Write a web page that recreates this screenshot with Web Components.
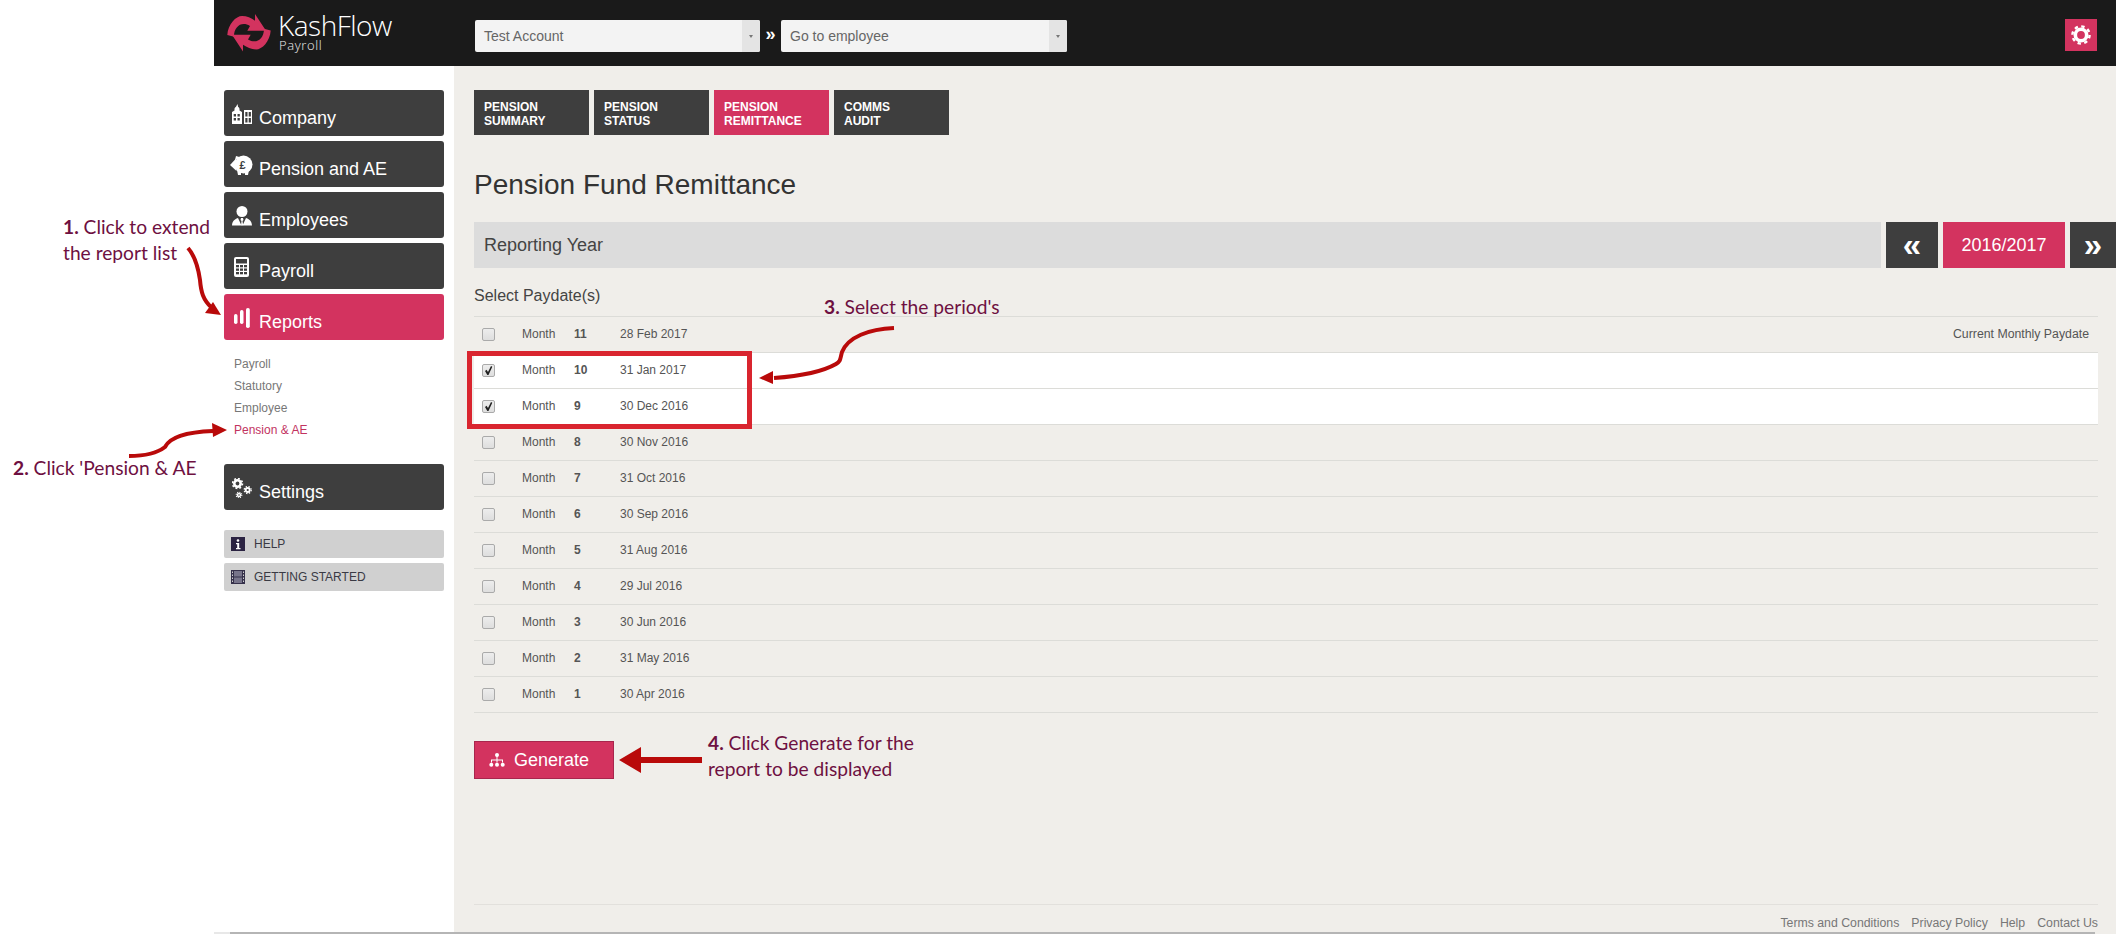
<!DOCTYPE html>
<html lang="en">
<head>
<meta charset="utf-8">
<title>KashFlow Payroll</title>
<style>
    html, body { margin: 0; height: 100%; background: #fff; overflow: hidden; }
    body { font-family: "Liberation Sans", Arial, sans-serif; }
</style>
</head>
<body>
<kf-page>
    <kf-topbar slot="top"></kf-topbar>
    <kf-sidebar slot="side"></kf-sidebar>
    <kf-remittance slot="main"></kf-remittance>
</kf-page>

<kf-callout x="63" y="214"><b>1.</b> Click to extend<br>the report list</kf-callout>
<kf-callout x="13" y="455"><b>2.</b> Click 'Pension &amp; AE</kf-callout>
<kf-callout x="824" y="294"><b>3.</b> Select the period's</kf-callout>
<kf-callout x="708" y="730"><b>4.</b> Click Generate for the<br>report to be displayed</kf-callout>
<kf-marks></kf-marks>

<script>
const ICONS = {
    company: `<svg viewBox="0 0 20 20" width="20" height="20" fill="#fff"><path d="M5.500 0l.6 3c.8.3 1.300 1 1.400 2v1.500l2.500 1.500v12H0V8l2.500-1.500V5c.1-1 .6-1.700 1.400-2z"/><path d="M12 6h8v14h-8z"/><g fill="#3e3e3e"><rect x="1.700" y="10" width="2.300" height="2.500"/><rect x="5.500" y="10" width="2.300" height="2.500"/><rect x="1.700" y="14" width="2.300" height="2.500"/><rect x="5.500" y="14" width="2.300" height="2.500"/><rect x="13.300" y="8" width="2.200" height="4.500"/><rect x="16.700" y="8" width="2.200" height="4.500"/><rect x="13.300" y="14" width="2.200" height="4.500"/><rect x="16.700" y="14" width="2.200" height="4.500"/></g></svg>`,
    pension: `<svg viewBox="0 0 24 20" width="24" height="20" fill="#fff"><circle cx="13.500" cy="9.500" r="9"/><path d="M0 10l6-6.500L6.500 16z"/><path d="M5 5l1-4 5 1.500zM7 15h4v5H8zM15 15h4l-1 5h-3z"/><text x="12.500" y="14" font-family="Liberation Sans, sans-serif" font-size="11" font-weight="bold" text-anchor="middle" fill="#3e3e3e">£</text></svg>`,
    employees: `<svg viewBox="0 0 20 20" width="20" height="20" fill="#fff"><circle cx="10" cy="5.500" r="5.500"/><path d="M0 19.500c.3-4 2-6 6-7.500l3.500 7.500zM20 19.500c-.3-4-2-6-6-7.500l-3.500 7.500z"/><path d="M9 12h2l.5 2-1 1 .7 4.500H9l.5-4.500-1-1z"/></svg>`,
    payroll: `<svg viewBox="0 0 15 20" width="15" height="20"><rect width="15" height="20" rx="2" fill="#fff"/><rect x="2" y="2" width="11" height="4.500" fill="#3e3e3e"/><g fill="#3e3e3e"><rect x="2" y="8" width="3" height="2.300"/><rect x="6" y="8" width="3" height="2.300"/><rect x="10" y="8" width="3" height="2.300"/><rect x="2" y="11.500" width="3" height="2.300"/><rect x="6" y="11.500" width="3" height="2.300"/><rect x="10" y="11.500" width="3" height="2.300"/><rect x="2" y="15" width="3" height="2.300"/><rect x="6" y="15" width="3" height="2.300"/><rect x="10" y="15" width="3" height="2.300"/></g></svg>`,
    reports: `<svg viewBox="0 0 16 20" width="16" height="20" fill="#fff"><rect x="0" y="6" width="3.500" height="10" rx="1.700"/><rect x="6" y="2" width="3.500" height="14" rx="1.700"/><rect x="12" y="0" width="3.800" height="20" rx="1.800"/></svg>`,
    settings: `<svg viewBox="0 0 20 20" width="20" height="20"><g fill="none" stroke="#fff"><circle cx="5.500" cy="5.500" r="3.200" stroke-width="2.600"/><circle cx="5.500" cy="5.500" r="5" stroke-width="1.600" stroke-dasharray="1.900 2"/><circle cx="15.700" cy="12" r="2" stroke-width="1.800"/><circle cx="15.700" cy="12" r="3.500" stroke-width="1.300" stroke-dasharray="1.400 1.400"/><circle cx="7" cy="17" r="1.500" stroke-width="1.500"/><circle cx="7" cy="17" r="2.800" stroke-width="1.100" stroke-dasharray="1.100 1.100"/></g></svg>`,
    help: `<svg viewBox="0 0 14 14" width="14" height="14"><rect width="14" height="14" fill="#2b2342"/><circle cx="7" cy="3.500" r="1.300" fill="#fff"/><path d="M5 6h3.200v5H9.500v1.200h-4.500V11h1.200V7.200H5z" fill="#fff"/></svg>`,
    started: `<svg viewBox="0 0 14 14" width="14" height="14"><rect width="14" height="14" fill="#35304a"/><rect x="3" y="1" width="8" height="5.500" fill="#77748a"/><rect x="3" y="7.500" width="8" height="5.500" fill="#77748a"/><g fill="#cfcfcf"><rect x="1" y="1.500" width="1" height="1.500"/><rect x="1" y="4.500" width="1" height="1.500"/><rect x="1" y="7.500" width="1" height="1.500"/><rect x="1" y="10.500" width="1" height="1.500"/><rect x="12" y="1.500" width="1" height="1.500"/><rect x="12" y="4.500" width="1" height="1.500"/><rect x="12" y="7.500" width="1" height="1.500"/><rect x="12" y="10.500" width="1" height="1.500"/></g></svg>`,
    sitemap: `<svg viewBox="0 0 16 14" width="16" height="14" fill="#fff"><circle cx="8" cy="2" r="2"/><path d="M7.500 3h1v3.500h5.500v3h-1V7.500H8.500v2h-1v-2H3v2H2v-3h5.500z"/><circle cx="2.300" cy="11.700" r="2"/><circle cx="8" cy="11.700" r="2"/><circle cx="13.700" cy="11.700" r="2"/></svg>`,
    gear: `<svg viewBox="0 0 20 20" width="20" height="20"><circle cx="10" cy="10" r="5.700" fill="none" stroke="#fff" stroke-width="3.600"/><circle cx="10" cy="10" r="8.600" fill="none" stroke="#fff" stroke-width="2.400" stroke-dasharray="3.400 3.350"/></svg>`
};

// page frame: empty gutter on the left, the app next to it
class KfPage extends HTMLElement {
    constructor() {
        super();
        this.attachShadow({ mode: 'open' });
        this.shadowRoot.innerHTML = `
      <style>
        :host { display: block; height: 934px; box-sizing: border-box; padding-left: 214px; }
        .app { display: grid; grid-template-columns: 240px 1fr; grid-template-rows: 66px 1fr 2px; height: 934px; }
        .top, .edge { grid-column: 1 / 3; }
        .side, .main { min-width: 0; }
        .edge { background: linear-gradient(to right, #e8e8e8 16px, #b5b5b5 16px, #b5b5b5 1881px, #f0eeea 1881px); }
      </style>
      <div class="app">
        <div class="top"><slot name="top"></slot></div>
        <div class="side"><slot name="side"></slot></div>
        <div class="main"><slot name="main"></slot></div>
        <div class="edge"></div>
      </div>`;
    }
}

class KfSelect extends HTMLElement {
    constructor() {
        super();
        this.attachShadow({ mode: 'open' });
        this.shadowRoot.innerHTML = `
      <style>
        :host { display: flex; width: 285px; height: 32px; margin-top: 20px; border-radius: 2px; overflow: hidden; background: #f3f3f3;
                font-size: 14px; color: #666; }
        .label { flex: 1; padding-left: 9px; line-height: 32px; }
        .arrow { width: 18px; background: #e4e4e4; display: flex; align-items: center; justify-content: center; }
        .arrow i { border: 2.500px solid transparent; border-top: 3px solid #777; border-bottom: 0; }
      </style>
      <div class="label"><slot></slot></div>
      <div class="arrow"><i></i></div>`;
    }
}

class KfTopbar extends HTMLElement {
    constructor() {
        super();
        this.attachShadow({ mode: 'open' });
        this.shadowRoot.innerHTML = `
      <style>
        :host { display: flex; align-items: flex-start; height: 66px; background: #1a1a1a; color: #fff; }
        .logo { width: 261px; height: 66px; display: flex; align-items: center; padding-left: 12px; box-sizing: border-box; gap: 6px; }
        .word { font-family: "Open Sans", sans-serif; font-weight: 300; margin-top: -4px; }
        .name { font-size: 28px; line-height: 28px; letter-spacing: -.5px; }
        .sub { font-size: 13px; line-height: 12px; letter-spacing: .6px; font-weight: 300; color: #eee; margin-left: 1px; }
        .sep { width: 21px; text-align: center; font: bold 18px/32px "Liberation Sans", sans-serif; margin-top: 18px; }
        .gear { width: 32px; height: 32px; margin: 19px 19px 0 auto; background: #d3335f; display: flex; align-items: center; justify-content: center; }
      </style>
      <div class="logo">
        <svg viewBox="0 0 46 38" width="46" height="38" fill="#d3335f">
          <path d="M1.300 21C2 10 10 2 16 2c5 0 9 2 13 4.700V0l11 16.700H21.300L24 12C16 7 8 12 8 22.700z"/>
          <path d="M1.300 21C2 10 10 2 16 2c5 0 9 2 13 4.700V0l11 16.700H21.300L24 12C16 7 8 12 8 22.700z" transform="rotate(180 23 18.700)"/>
        </svg>
        <div class="word"><div class="name">KashFlow</div><div class="sub">Payroll</div></div>
      </div>
      <kf-select>Test Account</kf-select>
      <div class="sep">»</div>
      <kf-select style="width: 286px">Go to employee</kf-select>
      <div class="gear">${ICONS.gear}</div>`;
    }
}

class KfNavButton extends HTMLElement {
    constructor() {
        super();
        this.attachShadow({ mode: 'open' });
    }

    connectedCallback() {
        const active = this.hasAttribute('active');
        this.shadowRoot.innerHTML = `
      <style>
        :host { display: flex; align-items: center; height: 46px; box-sizing: border-box; padding-top: 11px; border-radius: 3px;
                background: ${active ? '#d3335f' : '#3e3e3e'}; color: #fff; font-size: 18px; }
        .icon { width: 35px; display: flex; justify-content: center; margin-top: -10px; flex: none; }
      </style>
      <div class="icon">${ICONS[this.getAttribute('icon')]}</div>
      <slot></slot>`;
    }
}

class KfHelpLink extends HTMLElement {
    constructor() {
        super();
        this.attachShadow({ mode: 'open' });
    }

    connectedCallback() {
        this.shadowRoot.innerHTML = `
      <style>
        :host { display: flex; align-items: center; height: 28px; border-radius: 2px; background: #d0d0d0; color: #3a3a44; font-size: 12px; }
        .icon { width: 30px; padding-left: 7px; box-sizing: border-box; display: flex; flex: none; }
      </style>
      <div class="icon">${ICONS[this.getAttribute('icon')]}</div>
      <slot></slot>`;
    }
}

class KfSidebar extends HTMLElement {
    constructor() {
        super();
        this.attachShadow({ mode: 'open' });
        this.shadowRoot.innerHTML = `
      <style>
        :host { display: block; padding: 24px 10px 0; background: #fff; height: 100%; box-sizing: border-box; }
        .stack { display: grid; gap: 5px; }
        ul { list-style: none; margin: 13px 0 23px; padding: 0 0 0 10px; font-size: 12px; color: #777; }
        li { height: 22px; line-height: 22px; }
        li.on { color: #c2335f; }
        .help { display: grid; gap: 5px; margin-top: 20px; }
      </style>
      <div class="stack">
        <kf-nav-button icon="company">Company</kf-nav-button>
        <kf-nav-button icon="pension">Pension and AE</kf-nav-button>
        <kf-nav-button icon="employees">Employees</kf-nav-button>
        <kf-nav-button icon="payroll">Payroll</kf-nav-button>
        <kf-nav-button icon="reports" active>Reports</kf-nav-button>
      </div>
      <ul>
        <li>Payroll</li>
        <li>Statutory</li>
        <li>Employee</li>
        <li class="on">Pension &amp; AE</li>
      </ul>
      <kf-nav-button icon="settings">Settings</kf-nav-button>
      <div class="help">
        <kf-help-link icon="help">HELP</kf-help-link>
        <kf-help-link icon="started">GETTING STARTED</kf-help-link>
      </div>`;
    }
}

class KfTab extends HTMLElement {
    constructor() {
        super();
        this.attachShadow({ mode: 'open' });
    }

    connectedCallback() {
        this.shadowRoot.innerHTML = `
      <style>
        :host { display: block; width: 115px; height: 45px; box-sizing: border-box; padding: 10px 10px 0; color: #fff;
                background: ${this.hasAttribute('active') ? '#d3335f' : '#3e3e3e'};
                font: bold 12px/14px "Liberation Sans", sans-serif; }
      </style>
      <slot></slot>`;
    }
}

class KfPayRow extends HTMLElement {
    constructor() {
        super();
        this.attachShadow({ mode: 'open' });
    }

    connectedCallback() {
        const checked = this.hasAttribute('checked');
        const tick = checked ? '<svg viewBox="0 0 13 13" width="13" height="13"><path d="M3 7l1.500-1.300L6 8l3-6 1.300.8L6.500 11H5.300z" fill="#222"/></svg>' : '';
        this.shadowRoot.innerHTML = `
      <style>
        :host { display: flex; align-items: center; height: 36px; box-sizing: border-box; border-bottom: 1px solid #dcdcd8;
                background: ${checked ? '#fff' : 'transparent'}; color: #555; font-size: 12px; }
        .box { width: 13px; height: 13px; margin-left: 8px; box-sizing: border-box; border: 1px solid #aaa; border-radius: 2px;
               background: linear-gradient(#ededed, #dedede); position: relative; flex: none; }
        .box svg { position: absolute; left: -1px; top: -1px; }
        .m, .n, .d, .cur { margin-top: -1px; }
        .m { margin-left: 27px; width: 52px; }
        .n { width: 46px; font-weight: bold; }
        .d { flex: 1; }
        .cur { margin-right: 9px; font-size: 12.300px; }
      </style>
      <div class="box">${tick}</div>
      <div class="m">Month</div>
      <div class="n">${this.getAttribute('n')}</div>
      <div class="d">${this.getAttribute('date')}</div>
      <div class="cur"><slot></slot></div>`;
    }
}

class KfRemittance extends HTMLElement {
    constructor() {
        super();
        this.attachShadow({ mode: 'open' });
        this.rows = [
            [11, '28 Feb 2017'], [10, '31 Jan 2017'], [9, '30 Dec 2016'], [8, '30 Nov 2016'],
            [7, '31 Oct 2016'], [6, '30 Sep 2016'], [5, '31 Aug 2016'], [4, '29 Jul 2016'],
            [3, '30 Jun 2016'], [2, '31 May 2016'], [1, '30 Apr 2016']
        ];
    }

    connectedCallback() {
        const rows = this.rows.map(([n, date]) => `
        <kf-pay-row n="${n}" date="${date}" ${n === 10 || n === 9 ? 'checked' : ''}>${n === 11 ? 'Current Monthly Paydate' : ''}</kf-pay-row>`).join('');
        this.shadowRoot.innerHTML = `
      <style>
        :host { display: flex; flex-direction: column; height: 866px; box-sizing: border-box; padding: 24px 0 0 20px; background: #f0eeea; color: #333; }
        .tabs { display: flex; gap: 5px; }
        h1 { font-size: 28px; font-weight: normal; line-height: 32px; margin: 34px 0 21px; color: #333; }
        .year { display: flex; height: 46px; gap: 5px; color: #fff; }
        .year > div { display: flex; align-items: center; justify-content: center; }
        .year .label { flex: 1; justify-content: flex-start; padding-left: 10px; background: #dcdcdc; color: #444; font-size: 18px; }
        .year .step { width: 52px; background: #3e3e3e; font: bold 33px "Liberation Sans", sans-serif; }
        .year .now { width: 122px; background: #d3335f; font-size: 18px; }
        .year .step.next { width: 46px; }
        .sel { font-size: 16px; line-height: 18px; margin: 19px 0 11px; color: #444; }
        .list { margin-right: 18px; border-top: 1px solid #dcdcd8; }
        .go { align-self: flex-start; display: flex; align-items: center; gap: 9px; width: 140px; height: 38px; box-sizing: border-box;
              margin-top: 28px; padding-left: 14px; background: #d3335f; border: 1px solid #a8264d; color: #fff; font-size: 18px; }
        footer { margin: auto 18px 0 0; border-top: 1px solid #e2e0dc; height: 28px; box-sizing: border-box; display: flex; justify-content: flex-end;
                 align-items: center; gap: 12px; font-size: 12.300px; color: #777; padding-top: 8px; }
      </style>
      <div class="tabs">
        <kf-tab>PENSION<br>SUMMARY</kf-tab>
        <kf-tab>PENSION<br>STATUS</kf-tab>
        <kf-tab active>PENSION<br>REMITTANCE</kf-tab>
        <kf-tab>COMMS<br>AUDIT</kf-tab>
      </div>
      <h1>Pension Fund Remittance</h1>
      <div class="year">
        <div class="label">Reporting Year</div>
        <div class="step">«</div>
        <div class="now">2016/2017</div>
        <div class="step next">»</div>
      </div>
      <div class="sel">Select Paydate(s)</div>
      <div class="list">${rows}</div>
      <div class="go">${ICONS.sitemap}Generate</div>
      <footer><span>Terms and Conditions</span><span>Privacy Policy</span><span>Help</span><span>Contact Us</span></footer>`;
    }
}

// annotation text laid over the screenshot
class KfCallout extends HTMLElement {
    constructor() {
        super();
        this.attachShadow({ mode: 'open' });
    }

    connectedCallback() {
        this.shadowRoot.innerHTML = `
      <style>
        :host { position: absolute; left: ${this.getAttribute('x')}px; top: ${this.getAttribute('y')}px; white-space: nowrap;
                font: 19.200px/26px Lato, sans-serif; color: #6e1041; }
      </style>
      <slot></slot>`;
    }
}

// red arrows and the box round the two ticked rows
class KfMarks extends HTMLElement {
    constructor() {
        super();
        this.attachShadow({ mode: 'open' });
        this.shadowRoot.innerHTML = `
      <style>
        :host { position: absolute; left: 0; top: 0; width: 2116px; height: 934px; pointer-events: none; }
        svg { display: block; }
      </style>
      <svg width="2116" height="934" fill="#b90a0a">
        <rect x="469.500" y="353.500" width="280" height="73" fill="none" stroke="#d9252f" stroke-width="5"/>
        <g fill="none" stroke="#b90a0a" stroke-width="4">
          <path d="M188 248c7 8 10 18 12 32 1 12 3 20 12 28"/>
          <path d="M129 456c14 0 27-2 36-9 5-10 20-15 48-16"/>
          <path d="M894 328c-25 1-46 9-52 24-2 7-1 9-6 12-14 8-34 12-62 14"/>
        </g>
        <path d="M221 315l-16-2 8-11z"/>
        <path d="M227 430l-15-7 1 14z"/>
        <path d="M759 378l14-7v13z"/>
        <path d="M619 760l22-13v10h61v6h-61v10z"/>
      </svg>`;
    }
}

customElements.define('kf-page', KfPage);
customElements.define('kf-select', KfSelect);
customElements.define('kf-topbar', KfTopbar);
customElements.define('kf-nav-button', KfNavButton);
customElements.define('kf-help-link', KfHelpLink);
customElements.define('kf-sidebar', KfSidebar);
customElements.define('kf-tab', KfTab);
customElements.define('kf-pay-row', KfPayRow);
customElements.define('kf-remittance', KfRemittance);
customElements.define('kf-callout', KfCallout);
customElements.define('kf-marks', KfMarks);
</script>
</body>
</html>
